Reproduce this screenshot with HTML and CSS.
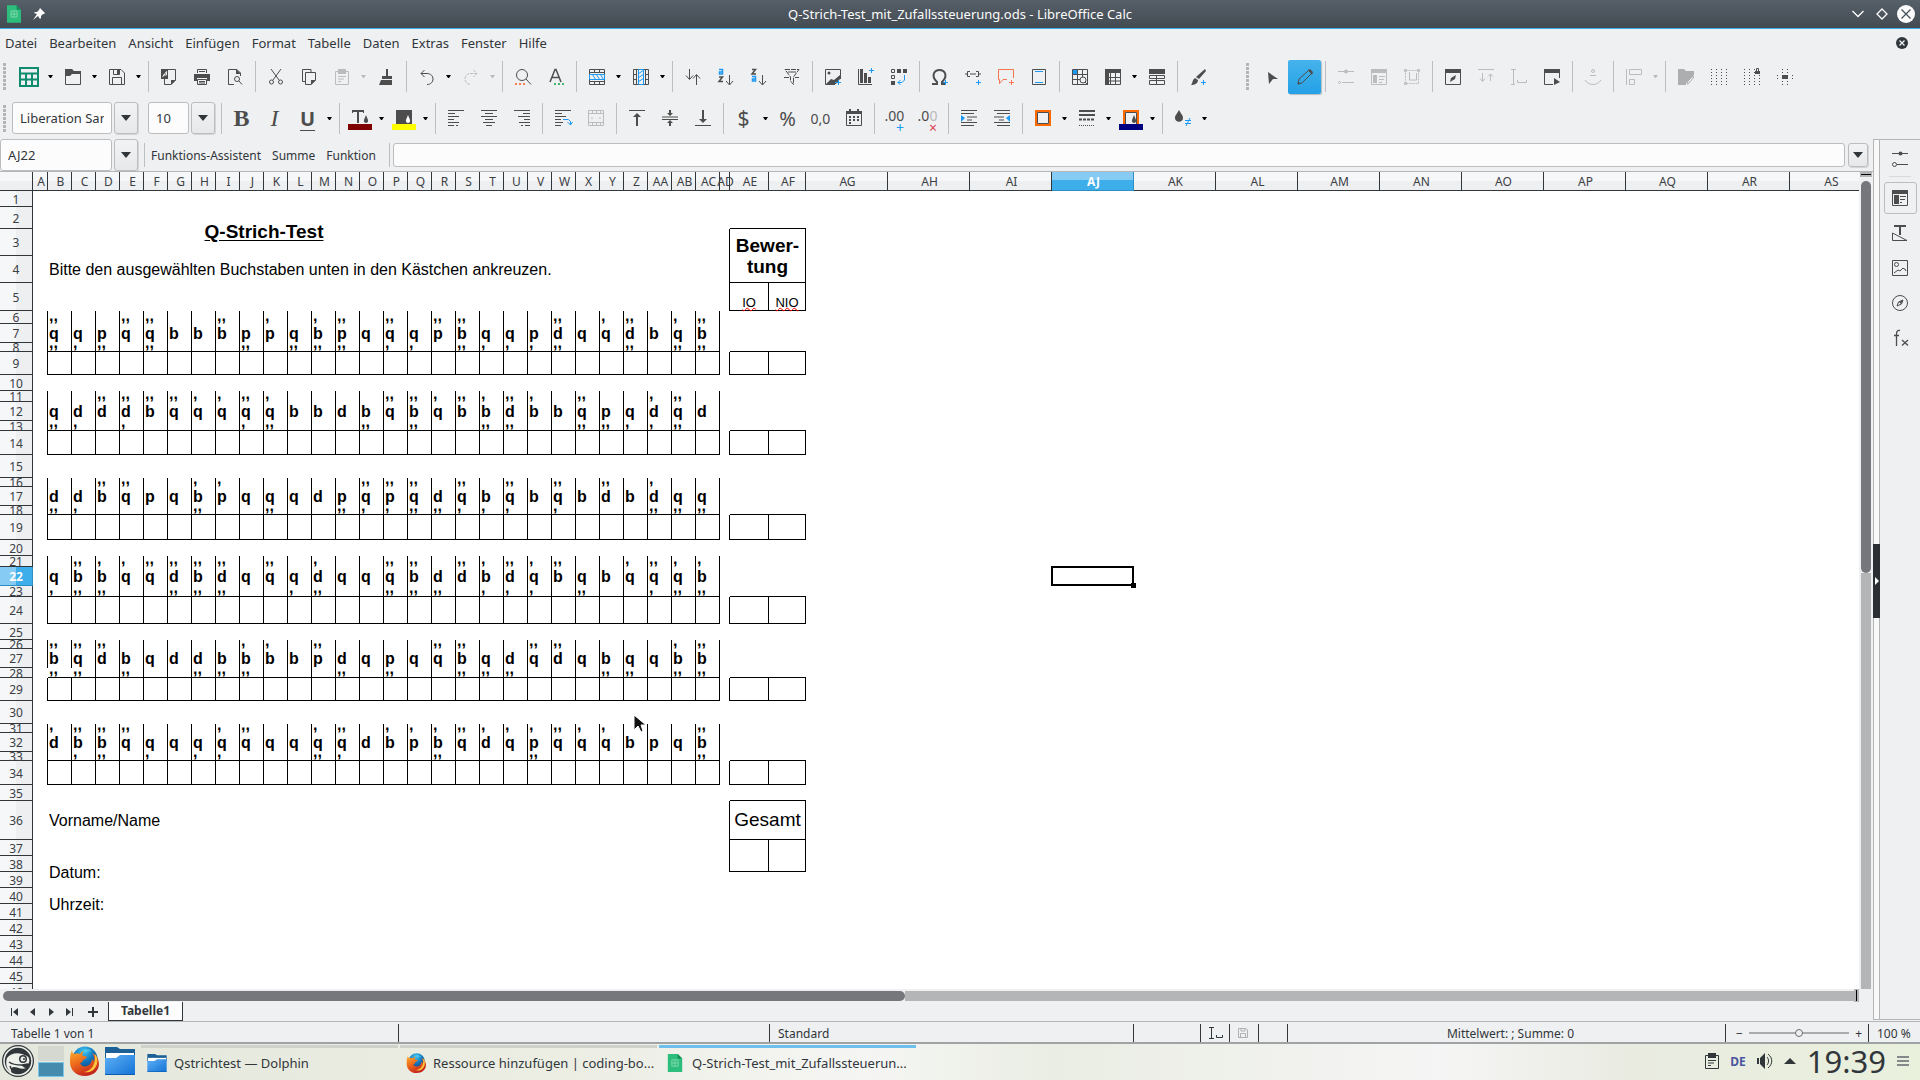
FILE: index.html
```
<!DOCTYPE html>
<html lang="de">

<head>
    <meta charset="UTF-8">
    <meta name="viewport" content="width=device-width, initial-scale=1.0">
    <title>Q-Strich-Test_mit_Zufallssteuerung.ods - LibreOffice Calc</title>
    <link rel="stylesheet" href="styles.css">
</head>

<body>

    <!-- small pictures that are used more than once -->
    <svg class="defs" aria-hidden="true">
        <defs>
            <linearGradient id="folderBlue" x1="0" y1="0" x2="1" y2="1">
                <stop offset="0" stop-color="#5fb0f5" />
                <stop offset="1" stop-color="#1272d6" />
            </linearGradient>
            <radialGradient id="globe" cx=".45" cy=".2" r=".8">
                <stop offset="0" stop-color="#3fc8f2" />
                <stop offset=".5" stop-color="#0f75bd" />
                <stop offset="1" stop-color="#123a78" />
            </radialGradient>
            <linearGradient id="fire" x1="0" y1="0" x2=".5" y2="1">
                <stop offset="0" stop-color="#fcb32c" />
                <stop offset=".5" stop-color="#ee6a1c" />
                <stop offset="1" stop-color="#c4261c" />
            </linearGradient>
        </defs>
        <symbol id="caret" viewBox="0 0 5 3"><path d="M0 0h5L3 3H2z" fill="currentColor" /></symbol>
        <symbol id="arrow" viewBox="0 0 10 6"><path d="M0 0h10L5 6z" fill="currentColor" /></symbol>
        <symbol id="folder" viewBox="0 0 30 28">
            <path d="M0 0h12l3 2h15v10H0z" fill="#1b5f96" />
            <path d="M1 6h28v8H1z" fill="#fff" />
            <path d="M0 11h11l4-3h15v20H0z" fill="url(#folderBlue)" />
            <path d="M0 27h30v1H0z" fill="#0d5cb0" />
        </symbol>
        <symbol id="firefox" viewBox="0 0 30 30">
            <circle cx="16" cy="13" r="12.500" fill="url(#globe)" />
            <path d="M14 4c3-2 7-1 9 2-3-1-4 0-6 1z" fill="#5fd0f2" opacity=".6" />
            <path d="M3 4c0 2 1 3 2 4 2-1 4-1 6 0 1-2 2-3 4-3-2 2-2 4-1 5 2 0 3 0 4 1-1 2-3 2-4 3 0 2-2 3-3 3 1 3 4 4 7 3 3-1 5-4 5-7 1 1 2 2 2 3 1-3 0-7-2-9 5 2 7 7 7 11 0 7-6 12-14 12C7 30 1 24 1 16c0-5 0-8 2-12z" fill="url(#fire)" />
            <path d="M26 8c3 4 3 10 0 14-3 4-7 5-11 4 7-1 12-7 11-18z" fill="#fdc43a" />
        </symbol>
        <symbol id="calcdoc" viewBox="0 0 16 20">
            <path d="M0 0h11l5 5v15H0z" fill="#2dbd7c" />
            <path d="M11 0l5 5h-5z" fill="#17895a" />
            <path d="M4.500 6.500h7v7h-7zM8 6.500v7M4.500 10h7" fill="none" stroke="#83dbb0" />
        </symbol>
    </svg>

    <header class="titlebar">
        <div class="title-left">
            <svg width="14" height="18"><use href="#calcdoc" /></svg>
            <svg width="12" height="12" viewBox="0 0 12 12"><path d="M7 0l5 5-1 1-1 0-2 2 0 2-1 1-2-3L0 12l4-6-3-1 1-1h2l2-2z" fill="#fcfcfc" /></svg>
        </div>
        <h1>Q-Strich-Test_mit_Zufallssteuerung.ods - LibreOffice Calc</h1>
        <div class="title-right">
            <button aria-label="Minimieren"><svg width="12" height="8" viewBox="0 0 12 8"><path d="M.5 1L6 6.500 11.500 1" fill="none" stroke="#fcfcfc" stroke-width="1.300" /></svg></button>
            <button aria-label="Wiederherstellen"><svg width="12" height="12" viewBox="0 0 12 12"><path d="M6 1l5 5-5 5-5-5z" fill="none" stroke="#fcfcfc" stroke-width="1.300" /></svg></button>
            <button aria-label="Schließen"><svg width="18" height="18" viewBox="0 0 18 18"><circle cx="9" cy="9" r="9" fill="#fcfcfc" /><path d="M4.500 4.500l9 9m0-9l-9 9" stroke="#475057" stroke-width="1.300" /></svg></button>
        </div>
    </header>

    <nav class="menubar">
        <button>Datei</button>
        <button>Bearbeiten</button>
        <button>Ansicht</button>
        <button>Einfügen</button>
        <button>Format</button>
        <button>Tabelle</button>
        <button>Daten</button>
        <button>Extras</button>
        <button>Fenster</button>
        <button>Hilfe</button>
        <button class="close-doc" aria-label="Dokument schließen"><svg width="12" height="12" viewBox="0 0 12 12"><circle cx="6" cy="6" r="6" fill="#31363b" /><path d="M3.500 3.500l5 5m0-5l-5 5" stroke="#eff0f1" stroke-width="1.300" /></svg></button>
    </nav>

    <!-- standard toolbar -->
    <div class="toolbar standard">
        <i class="grip"></i>
        <button aria-label="Neu"><svg class="big" viewBox="0 0 20 20"><path d="M1 1h18v18H1zM1 6.500h18M1 12.500h18M7 6.500V19M13 6.500V19" stroke="#0e8c6d" stroke-width="2" /></svg></button><button class="drop" aria-label="Neu, Auswahl"><svg><use href="#caret" /></svg></button>
        <button aria-label="Öffnen"><svg viewBox="0 0 16 16"><path d="M.5 15.500V3.500h15v12z" /><path d="M0 0h7l2 2h7v3H7L5 7H0z" class="f" /></svg></button><button class="drop" aria-label="Öffnen, Auswahl"><svg><use href="#caret" /></svg></button>
        <button aria-label="Speichern"><svg viewBox="0 0 16 16"><path d="M.5.5H12L15.500 4v11.500H.5zM3.500 15V8.500h9V15M4.500.5v5h6v-5" /><path d="M8 1h2v4H8z" class="f" /></svg></button><button class="drop" aria-label="Speichern, Auswahl"><svg><use href="#caret" /></svg></button>
        <i class="sep"></i>
        <button aria-label="Als PDF exportieren"><svg viewBox="0 0 16 16"><path d="M7 .5h7.500V11L10 15.500H3.500V10" /><path d="M0 0h7v10H0zM10 11h5l-5 5z" class="f" /><path d="M1.500 8l4-5.500V6H2" stroke="#eff0f1" /></svg></button>
        <button aria-label="Drucken"><svg viewBox="0 0 16 16"><path d="M3.500 4V.5h9V4M3.500 10.500h9v5h-9zM5 12.500h6M5 14h6M5 2.500h6" /><path d="M0 5h16v7h-3v-3H3v3H0z" class="f" /></svg></button>
        <button aria-label="Druckvorschau"><svg viewBox="0 0 16 16"><path d="M7 15.500H1.500V.5H10L13.500 4v3" /><path d="M9 0l5 5H9z" class="f" /><circle cx="10" cy="10" r="2.500" /><path d="M12 12l3 3.500" /></svg></button>
        <i class="sep"></i>
        <button aria-label="Ausschneiden"><svg viewBox="0 0 16 16"><path d="M3 0l8 11M13 0L5 11" /><circle cx="3.500" cy="13" r="2" /><circle cx="12.500" cy="13" r="2" /></svg></button>
        <button aria-label="Kopieren"><svg viewBox="0 0 16 16"><path d="M4 12.500H1.500V.5H10V3M4.500 3.500h10V11L10 15.500H4.500z" /><path d="M10 11h5l-5 5z" class="f" /></svg></button>
        <button disabled aria-label="Einfügen"><svg viewBox="0 0 16 16"><path d="M1.500 2.500h13v13h-13zM4 7.500h8M4 10h6M4 12.500h3" /><path d="M4 0h8v5H4z" class="f" /></svg></button><button class="drop" disabled aria-label="Einfügen, Auswahl"><svg><use href="#caret" /></svg></button>
        <button aria-label="Format übertragen"><svg viewBox="0 0 16 16"><path d="M8 0h2v7h4v3H4V7h4zM3 11h11v5H1z" class="f" /></svg></button>
        <i class="sep"></i>
        <button aria-label="Rückgängig"><svg viewBox="0 0 16 16"><path d="M5.500 1L2 4.500 5.500 8M2 4.500h6c8 0 8 11 0 11" /></svg></button><button class="drop" aria-label="Rückgängig, Auswahl"><svg><use href="#caret" /></svg></button>
        <button disabled aria-label="Wiederherstellen"><svg viewBox="0 0 16 16"><path d="M10.500 1L14 4.500 10.500 8M14 4.500H8c-8 0-8 11 0 11" stroke-dasharray="3 1" /></svg></button><button class="drop" disabled aria-label="Wiederherstellen, Auswahl"><svg><use href="#caret" /></svg></button>
        <i class="sep"></i>
        <button aria-label="Suchen und ersetzen"><svg viewBox="0 0 16 16"><circle cx="7" cy="6" r="5.500" /><path d="M11 10l5 5.500" /><path d="M0 15h10" stroke="#f67c50" stroke-width="2" stroke-dasharray="2" /></svg></button>
        <button aria-label="Rechtschreibung"><svg viewBox="0 0 16 16"><path d="M2 13L7 .5h1L13 13M4 8.500h7" stroke-width="1.500" /><path d="M6 15h10" stroke="#3fb56f" stroke-width="2" stroke-dasharray="2" /></svg></button>
        <i class="sep"></i>
        <button aria-label="Zeile"><svg viewBox="0 0 16 16"><path d="M.5.5h15v15H.5zM.5 3.500h15M.5 12.500h15M5.500 0v4M10.500 0v4M5.500 12v4M10.500 12v4" /><path d="M.5 5.500h15v5H.5zM3 5l4 6M7 5l4 6M11 5l4 6" stroke="#1d99f3" /></svg></button><button class="drop" aria-label="Zeile, Auswahl"><svg><use href="#caret" /></svg></button>
        <button aria-label="Spalte"><svg viewBox="0 0 16 16"><path d="M.5.5h15v15H.5zM3.500 0v16M12.500 0v16M0 5.500h4M0 10.500h4M12 5.500h4M12 10.500h4" /><path d="M5.500.5h5v15h-5zM5 5l6-4M5 9l6-4M5 13l6-4" stroke="#1d99f3" /></svg></button><button class="drop" aria-label="Spalte, Auswahl"><svg><use href="#caret" /></svg></button>
        <i class="sep"></i>
        <button aria-label="Sortieren"><svg viewBox="0 0 16 16"><path d="M4.500 0v10M1 6.500l3.500 4 3.500-4M11.500 6v10M8 9.500l3.500-4 3.500 4" /></svg></button>
        <button aria-label="Aufsteigend sortieren"><svg viewBox="0 0 16 16"><path d="M11.500 6v9.500M8 12l3.500 4 3.500-4" /><path d="M1 .5h3.500v4.500h-3V3H4" stroke="#1d99f3" stroke-width="1.500" /><path d="M1 8h3.500L1 12.500h4" stroke-width="1.500" /></svg></button>
        <button aria-label="Absteigend sortieren"><svg viewBox="0 0 16 16"><path d="M11.500 6v9.500M8 12l3.500 4 3.500-4" /><path d="M1 .5h3.500L1 5h4" stroke-width="1.500" /><path d="M1 7.500h3.500V12h-3v-2H4" stroke="#1d99f3" stroke-width="1.500" /></svg></button>
        <button aria-label="AutoFilter"><svg viewBox="0 0 16 16"><path d="M1 .5h14L9.500 8v7.500L6.500 12V8zM0 8.500h5M11 8.500h4" stroke-dasharray="5 1" /><path d="M4 3h8" /></svg></button>
        <i class="sep"></i>
        <button aria-label="Bild"><svg viewBox="0 0 16 16"><path d="M10 15.500H.5V.5h15V10" /><path d="M1 15l5-5 3 1 6-5v4l-4 5z" class="f" /><circle cx="4" cy="4" r="1.500" class="f" /><path d="M10 13.500h6M13.500 11v5" stroke="#1d99f3" /></svg></button>
        <button aria-label="Diagramm"><svg viewBox="0 0 16 16"><path d="M.5 0v15.500H14" /><path d="M2 0h3v14H2zM6 4h3v10H6zM10 8h3v6h-3z" class="f" /><path d="M11 1.500h5M13.500-1v5" stroke="#1d99f3" /></svg></button>
        <button aria-label="Pivot-Tabelle"><svg viewBox="0 0 16 16"><path d="M.5.500h3v3h-3zM.5 6.500h3v3h-3z" /><path d="M6 0h4v4H6zM12 0h4v4h-4zM0 12h4v4H0z" class="f" /><path d="M13.500 6v5L11 13.500H7M9.500 11L7 13.500 9.500 16" stroke="#1d99f3" /></svg></button>
        <i class="sep"></i>
        <button aria-label="Sonderzeichen"><svg viewBox="0 0 16 16"><path d="M0 15h5v-2C-2 6 3 1 7.500 1S17 6 10 13v2h3" stroke-width="2" /><path d="M11 13.500h5M13.500 11v5" stroke="#1d99f3" /></svg></button>
        <button aria-label="Hyperlink"><svg viewBox="0 0 16 16"><path d="M5 2.500H2.500v5H5M11 2.500h2.500v5H11M0 5h2M5 5h6M14 5h2" /><path d="M11 13.500h5M13.500 11v5" stroke="#1d99f3" /></svg></button>
        <button aria-label="Kommentar"><svg viewBox="0 0 16 16"><path d="M9 10.500H5l-3.500 4v-4h-1V.5h15V9M11 13.500h5M13.500 11v5" stroke="#f67450" /></svg></button>
        <button aria-label="Kopf- und Fußzeilen"><svg viewBox="0 0 16 16"><path d="M1.500.5h13v15h-13z" /><path d="M4 2.500h8M4 13.500h8" stroke="#1d99f3" /></svg></button>
        <i class="sep"></i>
        <button aria-label="Druckbereich"><svg viewBox="0 0 16 16"><path d="M.5.5h15v15H.5zM5.500 0v16M10.500 0v8M0 5.500h16M0 10.500h8" /><path d="M1 1h4v4H1z" fill="#1d99f3" stroke="none" /><circle cx="11" cy="11" r="3" fill="#eff0f1" /><path d="M13 13l3 3" /></svg></button>
        <button aria-label="Fixieren"><svg viewBox="0 0 16 16"><path d="M.5.5h15v15H.5zM5.500 4v12M10.500 4v12M4 8.500h12M4 12h12" /><path d="M0 0h16v4H4v12H0z" class="f" /></svg></button><button class="drop" aria-label="Fixieren, Auswahl"><svg><use href="#caret" /></svg></button>
        <button aria-label="Fenster teilen"><svg viewBox="0 0 16 16"><path d="M.5 6.500h15v3H.5zM.5 11.500h15v4H.5zM7.500 7v9" /><path d="M0 0h16v5H0z" class="f" /></svg></button>
        <i class="sep"></i>
        <button aria-label="Zeichnen"><svg viewBox="0 0 16 16"><path d="M15 0l1 2-7 8-3-2zM5 9l3 2c0 4-4 5-7 5 2-2 1-5 4-7z" class="f" /><path d="M11 13.500h5M13.500 11v5" stroke="#1d99f3" /></svg></button>

        <i class="grip second"></i>
        <button aria-label="Auswahl"><svg viewBox="0 0 16 16"><path d="M4 3l10 7H9l-4 5z" class="f" /></svg></button>
        <button class="checked" aria-label="Entwurfsmodus"><svg viewBox="0 0 16 16"><path d="M1 15l1-5L11.500 1.500l3 3L5 14z" /><path d="M11 1l2-1 3 3-1 3zM.5 15.500l1-3 2 2z" class="f" /></svg></button>
        <i class="sep"></i>
        <button disabled aria-label="Steuerelement"><svg viewBox="0 0 16 16"><path d="M0 2.500h16M4 13.500h12" /><circle cx="8" cy="2.500" r="2" class="f" /><circle cx="1.500" cy="13.500" r="1" /></svg></button>
        <button disabled aria-label="Formular"><svg viewBox="0 0 16 16"><path d="M.5.5h15v15H.5zM8 7.500h6M8 10.500h5M8 13.500h3" /><path d="M0 0h16v4H0zM2 6h4v8H2z" class="f" /></svg></button>
        <button disabled aria-label="Gruppe"><svg viewBox="0 0 16 16"><path d="M1.500 1.500h13v13h-13z" stroke-dasharray="2 1" /><path d="M.5.500h2v2h-2zM13.500.500h2v2h-2zM.5 13.500h2v2h-2zM5.500 3v8h7V4" /></svg></button>
        <i class="sep"></i>
        <button aria-label="Formular-Navigator"><svg viewBox="0 0 16 16"><path d="M.5.5h15v15H.5z" /><path d="M0 0h16v4H0zM5 13l1-4 5-3-1 4z" class="f" /></svg></button>
        <button disabled aria-label="Reihenfolge"><svg viewBox="0 0 16 16"><path d="M0 .5h16M4.500 4v8M2 9.500l2.500 3 2.500-3M12.500 12V5M10 7.500L12.500 5 15 7.500" /></svg></button>
        <button disabled aria-label="Feld hinzufügen"><svg viewBox="0 0 16 16"><path d="M0 .5h5M2.500 1v14M0 15.500h4M6.500 11v2.500h9V11" /></svg></button>
        <button aria-label="Im Entwurfsmodus öffnen"><svg viewBox="0 0 16 16"><path d="M9 15.500H.5V.5h15V9" /><path d="M0 0h16v4H0zM10 9l6 4-6 3z" class="f" /></svg></button>
        <i class="sep"></i>
        <button disabled aria-label="Anker"><svg viewBox="0 0 16 16"><circle cx="8" cy="2" r="1.500" /><path d="M5 6.500h6M0 11c4 6 12 6 16 0" /></svg></button>
        <i class="sep"></i>
        <button disabled aria-label="Ausrichten"><svg viewBox="0 0 16 16"><path d="M.5 0v16M3.500.5h12v5h-12zM3.500 10.500h5v5h-5z" /></svg></button><button class="drop" disabled aria-label="Ausrichten, Auswahl"><svg><use href="#caret" /></svg></button>
        <i class="sep"></i>
        <button aria-label="Formularentwurf"><svg viewBox="0 0 16 16" opacity=".4"><path d="M0 0h6l2 2h8v4L8 14v2H0z" class="f" /><path d="M9 15l1-3 5-5 1 1-5 6z" /></svg></button>
        <button aria-label="Raster anzeigen"><svg viewBox="0 0 16 16"><path d="M.5 0v16M5.500 0v16M10.500 0v16M15.500 0v16" stroke-dasharray="1 2" /></svg></button>
        <button aria-label="Am Raster fangen"><svg viewBox="0 0 16 16"><path d="M.5 0v16M5.500 0v16M10.500 0v16M15.500 6v10" stroke-dasharray="1 2" /><path d="M11 2h5v3h-5z" class="f" /><path d="M12.500 2V-.5h2V2" /></svg></button>
        <button aria-label="Hilfslinien"><svg viewBox="0 0 16 16"><path d="M.5 6v5M5.500 0v16M10.500 0v16M15.500 6v5" stroke-dasharray="1 2" /><path d="M5 6h6v4H5z" class="f" /></svg></button>
    </div>

    <!-- formatting toolbar -->
    <div class="toolbar formatting">
        <i class="grip"></i>
        <div class="combo font-name">
            <input type="text" value="Liberation Sans" aria-label="Schriftname">
            <button aria-label="Schriftliste"><svg><use href="#arrow" /></svg></button>
        </div>
        <div class="combo font-size">
            <input type="text" value="10" aria-label="Schriftgröße">
            <button aria-label="Größenliste"><svg><use href="#arrow" /></svg></button>
        </div>
        <i class="sep"></i>
        <button class="glyph bold" aria-label="Fett">B</button>
        <button class="glyph italic" aria-label="Kursiv">I</button>
        <button class="glyph under" aria-label="Unterstrichen">U</button><button class="drop" aria-label="Unterstrichen, Auswahl"><svg><use href="#caret" /></svg></button>
        <i class="sep"></i>
        <button aria-label="Schriftfarbe"><svg class="swatch" viewBox="0 0 24 20"><path d="M4 0h12v3h-1V2h-4v11H9V2H5v1H4zM18 5l2 5c1 4-5 4-4 0z" class="f" /><path d="M0 14h24v6H0z" fill="#800000" stroke="none" /></svg></button><button class="drop" aria-label="Schriftfarbe, Auswahl"><svg><use href="#caret" /></svg></button>
        <button aria-label="Zellhintergrund"><svg class="swatch" viewBox="0 0 24 20"><path d="M4 0h16v14H4z" class="f" /><path d="M16 5l2 5c1 4-5 4-4 0z" fill="#fff" stroke="none" /><path d="M0 14h24v6H0z" fill="#ffff00" stroke="none" /></svg></button><button class="drop" aria-label="Zellhintergrund, Auswahl"><svg><use href="#caret" /></svg></button>
        <i class="sep"></i>
        <button aria-label="Linksbündig"><svg viewBox="0 0 16 16"><path d="M0 .5h16M0 3.500h7M0 6.500h11M0 9.500h6M0 12.500h11M0 15.500h6M8 15.500h2" /></svg></button>
        <button aria-label="Zentriert"><svg viewBox="0 0 16 16"><path d="M0 .5h16M4 3.500h8M0 6.500h16M4 9.500h8M2 12.500h12M5 15.500h6" /></svg></button>
        <button aria-label="Rechtsbündig"><svg viewBox="0 0 16 16"><path d="M0 .5h16M9 3.500h7M4 6.500h12M10 9.500h6M5 12.500h11M7 15.500h2M11 15.500h5" /></svg></button>
        <i class="sep"></i>
        <button aria-label="Textumbruch"><svg viewBox="0 0 16 16"><path d="M0 .5h16M0 3.500h7M0 6.500h11M0 9.500h6M0 12.500h8M0 15.500h6" /><path d="M8 9.500h5.500l2 2v3M12.500 12l3 3 2-3" stroke="#1d99f3" /></svg></button>
        <button disabled aria-label="Zellen verbinden"><svg viewBox="0 0 16 16"><path d="M.5.5h15v15H.5zM0 3.500h16M0 12.500h16M4.500 0v4M8.500 0v4M12.500 0v4M4.500 12v4M8.500 12v4M12.500 12v4M3 8h2M11 8h2" /></svg></button>
        <i class="sep"></i>
        <button aria-label="Oben ausrichten"><svg viewBox="0 0 16 16"><path d="M0 .5h16" /><path d="M7 16V7H4l4-4 4 4H9v9z" class="f" /></svg></button>
        <button aria-label="Vertikal zentrieren"><svg viewBox="0 0 16 16"><path d="M0 7h16M0 9.500h16" /><path d="M7 0h2v3h2L8 6 5 3h2zM7 16h2v-3h2l-3-3-3 3h2z" class="f" /></svg></button>
        <button aria-label="Unten ausrichten"><svg viewBox="0 0 16 16"><path d="M0 15.500h16" /><path d="M7 0h2v9h3l-4 4-4-4h3z" class="f" /></svg></button>
        <i class="sep"></i>
        <button class="glyph money" aria-label="Währung">$</button><button class="drop" aria-label="Währung, Auswahl"><svg><use href="#caret" /></svg></button>
        <button class="glyph" aria-label="Prozent">%</button>
        <button class="glyph small" aria-label="Zahl">0,0</button>
        <button aria-label="Datum"><svg viewBox="0 0 16 16"><path d="M.5 1.500h15v14H.5z" /><path d="M0 1h3v-2h2v2h6v-2h2v2h3v3H0z" class="f" /><path d="M3 7h10M3 10h10M3 13h4" stroke-width="2" stroke-dasharray="2" /></svg></button>
        <i class="sep"></i>
        <button class="glyph decimal" aria-label="Dezimalstelle hinzufügen">.00<b>+</b></button>
        <button class="glyph decimal" aria-label="Dezimalstelle löschen">.0<span>0</span><b class="red">×</b></button>
        <i class="sep"></i>
        <button aria-label="Einzug erhöhen"><svg viewBox="0 0 16 16"><path d="M0 .5h16M0 3.500h13M6 7h10M6 10h5M0 12.500h16M0 15.500h13" /><path d="M0 5l4 3-4 4z" fill="#1d99f3" stroke="none" /></svg></button>
        <button aria-label="Einzug vermindern"><svg viewBox="0 0 16 16"><path d="M0 .5h16M3 3.500h13M0 7h10M5 10h5M0 12.500h16M3 15.500h13" /><path d="M16 5l-4 3 4 4z" fill="#1d99f3" stroke="none" /></svg></button>
        <i class="sep"></i>
        <button aria-label="Umrandung"><svg viewBox="0 0 16 16"><path d="M1 1h14v14H1z" stroke="#ff6a00" stroke-width="2" /><path d="M2.500 2.500h11v11h-11z" /></svg></button><button class="drop" aria-label="Umrandung, Auswahl"><svg><use href="#caret" /></svg></button>
        <button aria-label="Rahmenstil"><svg viewBox="0 0 16 16"><path d="M0 1h16M0 5h16" stroke-width="2" /><path d="M0 9.500h16" stroke-width="2" stroke-dasharray="3 1" /><path d="M0 15.500h16" stroke-dasharray="1" /></svg></button><button class="drop" aria-label="Rahmenstil, Auswahl"><svg><use href="#caret" /></svg></button>
        <button aria-label="Rahmenlinienfarbe"><svg class="swatch" viewBox="0 0 24 20"><path d="M5 15V1h14v14" stroke="#ff6a00" stroke-width="2" /><path d="M6.500 14V2.500h11V14" /><path d="M15 5l2 5c1 4-5 4-4 0z" class="f" /><path d="M0 14h24v6H0z" fill="#000080" stroke="none" /></svg></button><button class="drop" aria-label="Rahmenlinienfarbe, Auswahl"><svg><use href="#caret" /></svg></button>
        <i class="sep"></i>
        <button aria-label="Bedingte Formatierung"><svg viewBox="0 0 16 16"><path d="M4 0c2 4 4 5 4 8 0 5-8 5-8 0 0-3 2-4 4-8z" class="f" /><path d="M10 10.500h6M10 13.500h6M15 8l-4 8" stroke="#1d99f3" /></svg></button><button class="drop" aria-label="Bedingte Formatierung, Auswahl"><svg><use href="#caret" /></svg></button>
    </div>

    <main class="main">
        <div class="work">
            <div class="formula">
                <div class="combo name-box">
                    <input type="text" value="AJ22" aria-label="Namenfeld">
                    <button aria-label="Namenliste"><svg><use href="#arrow" /></svg></button>
                </div>
                <i class="sep"></i>
                <button class="text-btn">Funktions-Assistent</button>
                <button class="text-btn">Summe</button>
                <button class="text-btn">Funktion</button>
                <i class="sep"></i>
                <input class="formula-input" type="text" aria-label="Eingabezeile">
                <button class="expand" aria-label="Eingabezeile erweitern"><svg><use href="#arrow" /></svg></button>
            </div>

            <div class="grid-area">
                <div class="sheet-view">
                    <table class="sheet" id="sheet"></table>
                    <svg class="pointer" width="14" height="20" viewBox="0 0 14 20"><path d="M1 1v15l4-4 3 6 2-1-2-6h5z" fill="#111" stroke="#fff" /></svg>
                </div>
                <div class="vscroll"><i class="split"></i><i class="thumb"></i><i class="rest"></i></div>
            </div>
            <div class="hscroll"><i class="thumb"></i><i class="rest"></i><i class="split"></i></div>

            <div class="tabs">
                <button aria-label="Erste Tabelle"><svg viewBox="0 0 8 8"><path d="M0 0h1v8H0zM7 0v8L2 4z" /></svg></button>
                <button aria-label="Vorherige Tabelle"><svg viewBox="0 0 8 8"><path d="M6 0v8L1 4z" /></svg></button>
                <button aria-label="Nächste Tabelle"><svg viewBox="0 0 8 8"><path d="M2 0v8l5-4z" /></svg></button>
                <button aria-label="Letzte Tabelle"><svg viewBox="0 0 8 8"><path d="M7 0h1v8H7zM1 0v8l5-4z" /></svg></button>
                <button class="add" aria-label="Tabelle einfügen"><svg viewBox="0 0 10 10"><path d="M4 0h2v4h4v2H6v4H4V6H0V4h4z" /></svg></button>
                <button class="tab">Tabelle1</button>
            </div>
        </div>

        <aside class="sidebar">
            <button class="handle" aria-label="Seitenleiste ausblenden"><svg width="4" height="8" viewBox="0 0 4 8"><path d="M0 0l4 4-4 4z" fill="#fff" /></svg></button>
            <button aria-label="Einstellungen"><svg viewBox="0 0 16 16"><path d="M0 2.500h16M5 13.500h11" /><circle cx="8.500" cy="2.500" r="2" class="f" /><circle cx="2.500" cy="13.500" r="2" /></svg></button>
            <i class="line"></i>
            <button class="active" aria-label="Eigenschaften"><svg viewBox="0 0 16 16"><path d="M.5.5h15v15H.5zM8 6.500h6M8 9.500h5M8 12.500h2" /><path d="M0 0h16v4H0zM2 5h5v9H2z" class="f" /></svg></button>
            <button aria-label="Formatvorlagen"><svg viewBox="0 0 16 16"><path d="M2 0h12v2H9v8H7V2H2z" class="f" /><path d="M.5 8v7.500H15z" /></svg></button>
            <button aria-label="Galerie"><svg viewBox="0 0 16 16"><path d="M.5.5h15v15H.5zM2 13l4-3 2 1 3-3 1 1h1l1 2" /><circle cx="4.500" cy="4.500" r="2" /></svg></button>
            <button aria-label="Navigator"><svg viewBox="0 0 16 16"><circle cx="8" cy="8" r="7.500" /><path d="M5 11l1.500-4L11 5l-1.500 4z" /><path d="M7 7l4-2-2 4z" class="f" /></svg></button>
            <button aria-label="Funktionen"><svg viewBox="0 0 16 16"><path d="M8 .5C5 0 4.500 2 4.500 4v12M2 5.500h5M10 10l6 5.500M16 10l-6 5.500" stroke-width="1.300" /></svg></button>
        </aside>
    </main>

    <footer class="status">
        <span class="first">Tabelle 1 von 1</span>
        <span></span>
        <span>Standard</span>
        <span></span>
        <span class="icon"><svg width="14" height="12" viewBox="0 0 14 12"><path d="M0 .5h5M2.500 1v10M0 11.500h5M7.500 8v2.500h6V8" fill="none" stroke="#31363b" /></svg></span>
        <span class="icon"><svg width="10" height="10" viewBox="0 0 10 10"><path d="M.5.5H8L9.500 2v7.500h-9zM2.500 9.500v-4h5v4M3 .5V3h4V.5" fill="none" stroke="#b0b1b2" /></svg></span>
        <span></span>
        <span class="sum">Mittelwert: ; Summe: 0</span>
        <span class="zoom">
            <button aria-label="Verkleinern">−</button>
            <input type="range" min="0" max="100" value="50" aria-label="Maßstab">
            <button aria-label="Vergrößern">+</button>
        </span>
        <span>100 %</span>
    </footer>

    <div class="taskbar">
        <button class="launcher" aria-label="Anwendungsmenü">
            <svg width="32" height="32" viewBox="0 0 32 32"><circle cx="16" cy="16" r="16" fill="#31363b" /><circle cx="16" cy="16" r="14" fill="none" stroke="#eef0ea" stroke-width="1.500" /><path d="M5 13c3-4 9-6 15-4l5 2c3 2 3 6 1 8-2 1-5 1-7 1 2 1 3 3 5 3-4 2-9-1-12-1-3 0-4 3-2 6C5 25 3 19 5 13z" fill="#eef0ea" /><path d="M7 17c4 3 9 3 13 3l6-1M8 21c1 4 4 6 8 6" stroke="#31363b" fill="none" stroke-width="1.500" /><circle cx="21" cy="14" r="4" fill="#31363b" /><circle cx="21" cy="14" r="2.500" fill="#eef0ea" /><circle cx="22" cy="14" r="1" fill="#31363b" /></svg>
        </button>
        <div class="pager"><button aria-label="Arbeitsfläche 1"></button><button class="current" aria-label="Arbeitsfläche 2"></button></div>
        <button class="launch" aria-label="Firefox"><svg width="30" height="30"><use href="#firefox" /></svg></button>
        <button class="launch" aria-label="Dolphin"><svg width="30" height="28"><use href="#folder" /></svg></button>
        <button class="task"><svg width="20" height="18"><use href="#folder" /></svg><span>Qstrichtest — Dolphin</span></button>
        <button class="task"><svg width="20" height="20"><use href="#firefox" /></svg><span>Ressource hinzufügen | coding-bo...</span></button>
        <button class="task current"><svg width="20" height="18"><use href="#calcdoc" /></svg><span>Q-Strich-Test_mit_Zufallssteuerun...</span></button>
        <div class="tray">
            <svg width="14" height="16" viewBox="0 0 14 16"><path d="M.5 2.500h13v13H.5zM3 7.500h8M3 10h6M3 12.500h3" fill="none" stroke="#31363b" /><path d="M3 0h8v5H3z" fill="#31363b" /></svg>
            <b class="lang">DE</b>
            <svg width="16" height="16" viewBox="0 0 16 16"><path d="M0 5h2v6H0zM3 5l5-5v16l-5-5z" fill="#31363b" /><path d="M10 4c2 2 2 6 0 8M11 1c5 4 5 10 0 14" fill="none" stroke="#31363b" /></svg>
            <svg width="12" height="6" viewBox="0 0 12 6"><path d="M0 6l6-6 6 6z" fill="#31363b" /></svg>
            <time>19:39</time>
            <svg width="12" height="10" viewBox="0 0 12 10"><path d="M0 1h12M0 5h12M0 9h12" stroke="#86898b" stroke-width="2" /></svg>
        </div>
    </div>

    <script src="script.js"></script>
</body>

</html>
```
FILE: styles.css
```
* {
    box-sizing: border-box;
}

body {
    margin: 0;
    height: 100vh;
    display: flex;
    flex-direction: column;
    overflow: hidden;
    background-color: #eff0f1;
    color: #31363b;
    font-family: "Noto Sans", sans-serif;
    font-size: 13px;
}

button,
input {
    font: inherit;
    color: inherit;
}

button {
    border: none;
    background: none;
    padding: 0;
}

svg {
    display: block;
    flex: none;
}

.defs {
    position: absolute;
    width: 0;
    height: 0;
}

/* window title */
.titlebar {
    height: 29px;
    display: grid;
    grid-template-columns: 1fr auto 1fr;
    align-items: center;
    background: linear-gradient(#566069, #434a52);
    border-bottom: 1px solid #3daee9;
    color: #fcfcfc;
}

.titlebar h1 {
    margin: 0;
    font-size: 13px;
    font-weight: normal;
}

.title-left,
.title-right {
    display: flex;
    align-items: center;
    gap: 12px;
}

.title-left {
    padding-left: 7px;
}

.title-right {
    justify-content: flex-end;
    padding-right: 5px;
}

.title-right button:last-child {
    margin-left: -3px;
}

/* menu */
.menubar {
    height: 29px;
    display: flex;
    align-items: center;
    gap: 12px;
    padding: 0 12px 2px 5px;
}

.close-doc {
    margin-left: auto;
}

/* toolbars */
.toolbar {
    display: flex;
    align-items: center;
    padding-left: 3px;
    color: #4d4d4d;
}

.standard {
    height: 39px;
    padding-bottom: 2px;
}

.formatting {
    height: 42px;
}

.toolbar button,
.sidebar button {
    width: 33px;
    height: 34px;
    display: flex;
    align-items: center;
    justify-content: center;
    flex: none;
}

.toolbar svg,
.sidebar svg {
    width: 16px;
    height: 16px;
    overflow: visible;
    fill: none;
    stroke: currentColor;
}

.toolbar .f,
.sidebar .f {
    fill: currentColor;
    stroke: none;
}

.toolbar svg.big {
    width: 20px;
    height: 20px;
}

.toolbar svg.swatch {
    width: 24px;
    height: 20px;
    margin-top: 4px;
}

.toolbar button:disabled {
    color: #bbbcbd;
}

.toolbar .drop {
    width: 11px;
    color: #000;
}

.toolbar .drop svg {
    width: 5px;
    height: 3px;
    stroke: none;
}

.toolbar .checked {
    background: linear-gradient(#46b3ec, #24a1e6);
    border-radius: 2px;
    box-shadow: 1px 1px 1px #b5bdc3;
}

.grip {
    width: 3px;
    height: 27px;
    flex: none;
    margin-right: 6px;
    background: repeating-linear-gradient(#b4b5b7 0 3px, transparent 3px 4px);
}

.grip.second {
    margin-left: 32px;
}

.sep {
    width: 1px;
    height: 31px;
    flex: none;
    margin: 0 3px 0 4px;
    background-color: #bdbebf;
}

.combo {
    display: flex;
    gap: 2px;
    height: 32px;
}

.combo input,
.combo button,
.expand,
.formula-input {
    border: 1px solid #bbbdbf;
    border-radius: 3px;
}

.combo input {
    min-width: 0;
    flex: 1;
    padding: 0 7px;
    background-color: #fcfcfc;
    color: #31363b;
}

.toolbar .combo button,
.combo button,
.expand {
    width: 24px;
    height: 100%;
    display: flex;
    align-items: center;
    justify-content: center;
    background: linear-gradient(#f2f3f4, #e7e8e9);
    box-shadow: 1px 1px 0 #d5d6d7;
    color: #31363b;
}

.toolbar .combo svg,
.combo svg,
.expand svg {
    width: 10px;
    height: 6px;
    stroke: none;
}

.font-name {
    width: 126px;
    margin-right: 10px;
}

.font-size {
    width: 67px;
    margin-right: 2px;
}

.glyph {
    font-size: 20px;
}

.toolbar .bold {
    font-family: "Liberation Serif", serif;
    font-size: 24px;
    font-weight: bold;
}

.toolbar .italic {
    font-family: "Liberation Serif", serif;
    font-size: 24px;
    font-style: italic;
}

.toolbar .under {
    font-size: 20px;
    font-weight: bold;
    text-decoration: underline 1px;
    text-underline-offset: 4px;
}

.toolbar .money {
    font-size: 21px;
}

.toolbar .small {
    font-size: 14px;
}

.toolbar .decimal {
    position: relative;
    font-size: 14px;
    padding-bottom: 6px;
}

.decimal span {
    color: #b9babb;
}

.decimal b {
    position: absolute;
    right: 7px;
    bottom: 0;
    line-height: 14px;
    font-weight: normal;
    color: #1d99f3;
}

.decimal .red {
    color: #da4453;
}

/* main area */
.main {
    flex: 1;
    min-height: 0;
    display: flex;
}

.work {
    flex: 1;
    min-width: 0;
    display: flex;
    flex-direction: column;
}

.formula {
    height: 32px;
    display: flex;
    align-items: center;
}

.name-box {
    width: 138px;
}

.formula .sep {
    height: 24px;
    margin: 0 6px;
}

.text-btn {
    margin-right: 11px;
    font-size: 12px;
}

.formula .text-btn + .sep {
    margin: 0 3px 0 2px;
}

.formula-input {
    flex: 1;
    height: 24px;
    background-color: #fcfcfc;
}

.expand {
    width: 20px;
    height: 24px;
    margin: 0 5px 0 3px;
}

.grid-area {
    flex: 1;
    min-height: 0;
    display: flex;
    border-top: 1px solid #b4b5b7;
}

.sheet-view {
    position: relative;
    flex: 1;
    min-width: 0;
    overflow: hidden;
    background-color: #fff;
}

/* spreadsheet, column widths come from the script */
.sheet {
    table-layout: fixed;
    width: 0;
    border-collapse: separate;
    border-spacing: 0;
    color: #000;
    font-family: "Liberation Sans", Arial, sans-serif;
    font-size: 16px;
}

.sheet tr {
    height: var(--h);
}

.sheet th,
.sheet td {
    padding: 0;
    line-height: calc(var(--h) - 1px);
    white-space: nowrap;
}

.sheet th {
    border-right: 1px solid #31363b;
    border-bottom: 1px solid #31363b;
    background: linear-gradient(#f6f7f8 50%, #eeeff1 50%);
    color: #3b4045;
    font-family: "Noto Sans", sans-serif;
    font-size: 12px;
    font-weight: normal;
}

.sheet th span {
    display: flex;
    justify-content: center;
    padding-top: 1px;
    margin-bottom: -1px;
}

.sheet thead th span {
    padding-left: 2px;
}

.sheet tbody th {
    background: linear-gradient(to right, #f6f7f8 50%, #eeeff1 50%);
}

.sheet thead th.current {
    background: linear-gradient(#86cbf3 45%, #3daee9 45%);
    border-color: #2b8fc4;
    color: #fcfcfc;
    font-weight: bold;
}

.sheet tbody th.current {
    background: linear-gradient(to right, #86cbf3 50%, #3daee9 50%);
    border-color: #2b8fc4;
    color: #fcfcfc;
    font-weight: bold;
}

.sheet .right {
    border-right: 1px solid #000;
}

.sheet .bottom {
    border-bottom: 1px solid #000;
}

.sheet .letter {
    padding-left: 1px;
    font-weight: bold;
}

.sheet .mark {
    padding-left: 1px;
    vertical-align: bottom;
    font-weight: bold;
}

/* rows of marks are lower than a text line, so the text grows upwards */
.mark span {
    height: 0;
    display: flex;
    align-items: flex-end;
    line-height: 17px;
}

.sheet .text {
    padding-left: 1px;
}

.sheet .title {
    font-size: 19px;
    font-weight: bold;
    text-align: center;
    text-decoration: underline;
    text-underline-offset: 2px;
}

.sheet .rating {
    font-size: 19px;
    font-weight: bold;
    text-align: center;
    line-height: 21px;
    white-space: normal;
}

.sheet .total {
    font-size: 19px;
    text-align: center;
}

.sheet .small-head {
    font-size: 13px;
    text-align: center;
    vertical-align: bottom;
    line-height: 15px;
    text-decoration: underline wavy #f00 1px;
    text-underline-offset: 0;
}

.sheet .cursor {
    position: relative;
}

.cursor::before {
    content: "";
    position: absolute;
    inset: -1px 0 0 -1px;
    border: 2px solid #000;
}

.cursor::after {
    content: "";
    position: absolute;
    right: -2px;
    bottom: -2px;
    width: 5px;
    height: 5px;
    background-color: #000;
}

.pointer {
    position: absolute;
    left: 633px;
    top: 542px;
}

/* scroll bars */
.vscroll {
    width: 14px;
    display: flex;
    flex-direction: column;
    align-items: center;
    background-color: #eff0f1;
}

.vscroll .split {
    width: 12px;
    height: 5px;
    border: solid #b4b5b7;
    border-width: 2px 1px;
    background: #000;
    margin-bottom: 4px;
}

.vscroll .thumb {
    width: 10px;
    flex: 485;
    border-radius: 5px;
    background-color: #75777c;
}

.vscroll .rest {
    width: 10px;
    flex: 515;
    background-color: #b4b5b7;
}

.hscroll {
    height: 13px;
    display: flex;
    align-items: center;
    padding: 0 14px 0 3px;
}

.hscroll .thumb {
    height: 10px;
    flex: 901;
    border-radius: 5px;
    background-color: #75777c;
}

.hscroll .rest {
    height: 10px;
    flex: 948;
    background-color: #b4b5b7;
}

.hscroll .split {
    width: 5px;
    height: 13px;
    border: solid #b4b5b7;
    border-width: 1px 2px;
    background: #000;
}

/* sheet tabs */
.tabs {
    height: 19px;
    display: flex;
    align-items: center;
    padding-left: 6px;
}

.tabs button {
    width: 18px;
    height: 100%;
}

.tabs svg {
    width: 8px;
    height: 8px;
    margin: 0 auto;
    fill: #31363b;
}

.tabs .add {
    width: 30px;
}

.tabs .add svg {
    width: 10px;
    height: 10px;
}

.tabs .tab {
    width: 75px;
    height: 19px;
    background-color: #fcfcfc;
    border: solid #31363b;
    border-width: 0 1px 1px;
    font-size: 12px;
    font-weight: bold;
    line-height: 18px;
}

/* sidebar */
.sidebar {
    position: relative;
    width: 47px;
    display: flex;
    flex-direction: column;
    align-items: center;
    border: 1px solid #b4b5b7;
    border-right: none;
    background: linear-gradient(to right, #f8f8f9 5px, #b4b5b7 5px 6px, #eff0f1 6px);
    color: #4d4d4d;
    padding: 1px 0 0 6px;
    margin-bottom: 1px;
}

.sidebar button {
    width: 33px;
    height: 35px;
}

.sidebar .line {
    width: 22px;
    height: 1px;
    margin: 0 0 5px;
    background-color: #d8d9da;
}

.sidebar .active {
    height: 32px;
    margin-bottom: 1px;
    border: 1px solid #bbbdbf;
    border-radius: 3px;
}

.sidebar .handle {
    position: absolute;
    left: -1px;
    top: 46%;
    width: 7px;
    height: 74px;
    background-color: #2b2e33;
}

.sidebar .handle svg {
    width: 4px;
    height: 8px;
    stroke: none;
}

/* status bar */
.status {
    height: 23px;
    display: grid;
    grid-template-columns: 399fr 371fr 364fr 67fr 29fr 29fr 29fr 438fr 143fr 51fr;
    align-items: end;
    border-top: 1px solid #b4b5b7;
    border-bottom: 2px solid #a0a2a4;
    font-size: 12px;
}

.status > span {
    min-width: 0;
    height: 18px;
    display: flex;
    align-items: center;
    padding-left: 8px;
    border-right: 1px solid #31363b;
}

.status > .first {
    padding-left: 11px;
}

.status > span:last-child {
    border-right: none;
    white-space: nowrap;
}

.status > .sum {
    justify-content: center;
}

.status > .zoom {
    gap: 6px;
    padding: 0 6px 0 10px;
}

.zoom input {
    flex: 1;
    min-width: 0;
    height: 12px;
    margin: 0;
    appearance: none;
    background: linear-gradient(transparent 5px, #a9abad 5px 7px, transparent 7px);
}

.zoom input::-webkit-slider-thumb {
    appearance: none;
    width: 8px;
    height: 8px;
    border: 1px solid #6b6e70;
    border-radius: 50%;
    background-color: #eff0f1;
}

/* desktop panel */
.taskbar {
    height: 36px;
    display: flex;
    align-items: center;
    gap: 2px;
    padding: 0 0 2px 2px;
    background: linear-gradient(to right, #e4e7dc, #eceee4 30%, #f5f6f4 45%, #eaede3 55%, #f5f5f5 75%, #e9ebe1 85%, #e9f0dc);
}

.pager {
    width: 26px;
    margin: 0 1px 0 2px;
    display: flex;
    flex-direction: column;
    gap: 1px;
}

.pager button {
    height: 15px;
    background-color: #d5d7d1;
}

.pager .current {
    background-color: #458bad;
    border: 1px solid #7cc7e8;
}

.launch {
    width: 34px;
    display: flex;
    justify-content: center;
}

.task {
    width: 257px;
    height: 32px;
    display: flex;
    align-items: center;
    gap: 7px;
    padding: 0 6px;
    border-top: 3px solid #cfd1ca;
    white-space: nowrap;
}

.launch + .task {
    margin-left: 2px;
}

.task.current {
    border-color: #6dc0ec;
}

.tray {
    margin-left: auto;
    display: flex;
    align-items: center;
    gap: 11px;
    padding-right: 11px;
}

.lang {
    color: #4a55a0;
    font-size: 12px;
}

.tray time {
    font-size: 31px;
    line-height: 34px;
}
```
FILE: script.js
```
// last pixel row and column widths of the sheet, in px
const rowHeights = [
    16, 22, 27, 27, 28, 13, 19, 9, 23, 16, 11, 19, 10, 24, 23, 9, 19, 9, 25, 16, 11, 19, 11,
    27, 16, 9, 19, 10, 23, 23, 9, 19, 9, 24, 16, 39, 16, 16, 16, 16, 16, 16, 16, 16, 16, 16
];
const colNames = [];
for (let i = 0; i < 45; i++) {
    const last = String.fromCharCode(65 + i % 26);
    colNames.push(i < 26 ? last : 'A' + last);
}
const colWidths = colNames.map((name, i) => {
    if (i === 0) return 15;
    if (i <= 28) return 24;
    return { AD: 10, AE: 39, AF: 37 }[name] || 82;
});

// one test line: first row, marks above, letters, marks below
// 0 = no mark, 1 = one stroke, 2 = two strokes
const tests = [
    [6, '2002200201012020220002012012', 'qqpqqbbbppqbpqqqpbqqpdqqdbqb', '2120200020222011021112002022'],
    [11, '0022221121000022121210200120', 'qdddbqqqqqbbdbqbqbbdbbqpqdqd', '2101000012000202002200221120'],
    [16, '0022001100000222020202020100', 'ddbqpqbpqqqdpqpqdqbqbqbdbdqq', '2100002002002112211101000222'],
    [21, '0211222202010022021212001211', 'qbbqqdbdqqqdqqqbddbdqbqbqqqb', '1220022200120022201110200122'],
    [26, '2220000011020000220022000012', 'bqdbqddbbbbpdqpqqbqdqdqbqqbb', '2202002220002020022200022022'],
    [31, '1222000120012011121112110002', 'dbbqqqqqqqqqqdbpbqdqpqqqbpqb', '0120101100021000200020000002']
];

// merged or plain text cells: colspan, rowspan, class, text
const texts = {
    B2: [18, 2, 'title', 'Q-Strich-Test'],
    B4: [26, 1, 'text', 'Bitte den ausgewählten Buchstaben unten in den Kästchen ankreuzen.'],
    AE3: [2, 2, 'rating', 'Bewer-tung'],
    AE5: [1, 1, 'small-head', 'IO'],
    AF5: [1, 1, 'small-head', 'NIO'],
    B36: [10, 1, 'text', 'Vorname/Name'],
    AE36: [2, 1, 'total', 'Gesamt'],
    AE37: [1, 2, '', ''],
    AF37: [1, 2, '', ''],
    B38: [10, 2, 'text', 'Datum:'],
    B40: [10, 2, 'text', 'Uhrzeit:']
};

const boxRows = [3, 4, 5, 9, 14, 19, 24, 29, 34, 36, 37, 38];
const boxLines = [2, 4, 5, 8, 9, 13, 14, 18, 19, 23, 24, 28, 29, 33, 34, 35, 36, 38];

function addBorders(td, c, r, lastCol, lastRow) {
    const test = tests.find(t => r >= t[0] && r <= t[0] + 3);
    const name = colNames[c];
    if (test && c <= 28 && !(r === 28 && c < 2)) td.classList.add('right');
    if (test && c > 0 && c <= 28 && r - test[0] >= 2) td.classList.add('bottom');
    if (boxRows.includes(r) && lastCol >= 29 && lastCol <= 31) td.classList.add('right');
    if ((name === 'AE' || name === 'AF') && boxLines.includes(lastRow)) td.classList.add('bottom');
}

const table = document.getElementById('sheet');

const group = document.createElement('colgroup');
[33, ...colWidths].forEach(width => {
    const col = document.createElement('col');
    col.style.width = width + 'px';
    group.appendChild(col);
});
table.appendChild(group);

function heading(text, current) {
    const th = document.createElement('th');
    const span = document.createElement('span');
    span.textContent = text;
    th.appendChild(span);
    if (current) th.className = 'current';
    return th;
}

const headRow = table.createTHead().insertRow();
headRow.style.setProperty('--h', '19px');
headRow.appendChild(heading('', false));
colNames.forEach(name => headRow.appendChild(heading(name, name === 'AJ')));

const body = table.createTBody();
const covered = new Set();

rowHeights.forEach((height, i) => {
    const r = i + 1;
    const tr = body.insertRow();
    tr.style.setProperty('--h', height + 'px');
    tr.appendChild(heading(r, r === 22));

    const test = tests.find(t => r >= t[0] && r <= t[0] + 2);

    colNames.forEach((name, c) => {
        if (covered.has(name + r)) return;
        const td = tr.insertCell();
        let colSpan = 1;
        let rowSpan = 1;

        if (texts[name + r]) {
            const [cs, rs, cls, text] = texts[name + r];
            colSpan = td.colSpan = cs;
            rowSpan = td.rowSpan = rs;
            if (cls) td.className = cls;
            td.textContent = text;
            for (let x = 0; x < cs; x++) {
                for (let y = 0; y < rs; y++) covered.add(colNames[c + x] + (r + y));
            }
        } else if (test && c > 0 && c <= 28) {
            const value = test[r - test[0] + 1][c - 1];
            if (r - test[0] === 1) {
                td.className = 'letter';
                td.textContent = value;
            } else {
                td.className = 'mark';
                const span = document.createElement('span');
                span.textContent = ','.repeat(value);
                td.appendChild(span);
            }
        }
        if (name + r === 'AJ22') td.className = 'cursor';
        addBorders(td, c, r, c + colSpan - 1, r + rowSpan - 1);
    });
});
```
